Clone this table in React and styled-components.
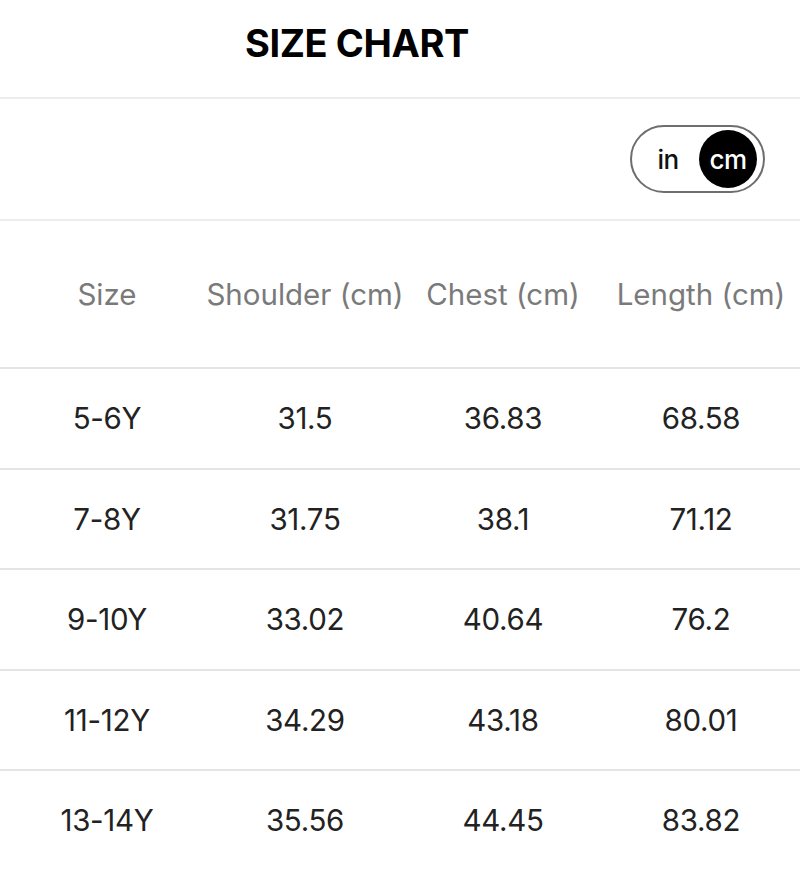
import React, { useState } from "react";
import styled, { createGlobalStyle } from "styled-components";

const Global = createGlobalStyle`
  html, body { margin: 0; padding: 0; background: #fff; }
  body { font-family: Inter, "Noto Sans", sans-serif; -webkit-font-smoothing: antialiased; }
`;

const Page = styled.div`
  width: 800px;
  background: #fff;
`;

const Header = styled.header`
  height: 99px;
  box-sizing: border-box;
  display: flex;
  align-items: center;
  justify-content: center;
  padding: 0 86px 11px 0;
  border-bottom: 2px solid #ececec;
`;

const Title = styled.h1`
  margin: 0;
  font-size: 38px;
  font-weight: 700;
  color: #000;
  letter-spacing: -0.4px;
`;

const ToggleRow = styled.div`
  height: 120px;
  display: flex;
  align-items: center;
  justify-content: flex-end;
  padding-right: 35px;
  border-bottom: 2px solid #ececec;
`;

const Toggle = styled.div`
  width: 135px;
  height: 68px;
  box-sizing: border-box;
  border: 2px solid #6e6e6e;
  border-radius: 34px;
  display: flex;
  align-items: center;
  justify-content: flex-end;
  padding: 0 6px 0 0;
  gap: 2px;
`;

const Opt = styled.button`
  border: none;
  cursor: pointer;
  font-family: inherit;
  font-size: 26px;
  font-weight: 500;
  padding: 0;
  width: 58px;
  height: 58px;
  border-radius: 50%;
  background: ${(p) => (p.$active ? "#000" : "transparent")};
  color: ${(p) => (p.$active ? "#fff" : "#111")};
  display: flex;
  align-items: center;
  justify-content: center;
  letter-spacing: -0.5px;
`;

const Table = styled.div`
  display: grid;
  grid-template-columns: repeat(4, 1fr);
  padding-left: 8px;
`;

const Cell = styled.div`
  display: flex;
  align-items: center;
  justify-content: center;
  height: ${(p) => (p.$head ? "146px" : "98.5px")};
  border-bottom: 2px solid #e4e4e4;
  margin-left: ${(p) => (p.$first ? "-8px" : "0")};
  padding-left: ${(p) => (p.$first ? "8px" : "0")};
  font-size: 29.5px;
  color: ${(p) => (p.$head ? "#7a7a7a" : "#222")};
  font-weight: 400;
  white-space: nowrap;
  letter-spacing: ${(p) => (p.$head ? "0" : "-0.3px")};
`;

const heads = ["Size", "Shoulder (cm)", "Chest (cm)", "Length (cm)"];
const rows = [
  ["5-6Y", "31.5", "36.83", "68.58"],
  ["7-8Y", "31.75", "38.1", "71.12"],
  ["9-10Y", "33.02", "40.64", "76.2"],
  ["11-12Y", "34.29", "43.18", "80.01"],
  ["13-14Y", "35.56", "44.45", "83.82"],
];

export default function App() {
  const [unit, setUnit] = useState("cm");
  return (
    <Page>
      <Global />
      <Header>
        <Title>SIZE CHART</Title>
      </Header>
      <ToggleRow>
        <Toggle>
          <Opt $active={unit === "in"} onClick={() => setUnit("in")}>in</Opt>
          <Opt $active={unit === "cm"} onClick={() => setUnit("cm")}>cm</Opt>
        </Toggle>
      </ToggleRow>
      <Table>
        {heads.map((h, i) => (
          <Cell key={h} $head $first={i === 0}>{h}</Cell>
        ))}
        {rows.map((r) =>
          r.map((v, i) => (
            <Cell key={r[0] + i} $first={i === 0}>{v}</Cell>
          ))
        )}
      </Table>
    </Page>
  );
}
